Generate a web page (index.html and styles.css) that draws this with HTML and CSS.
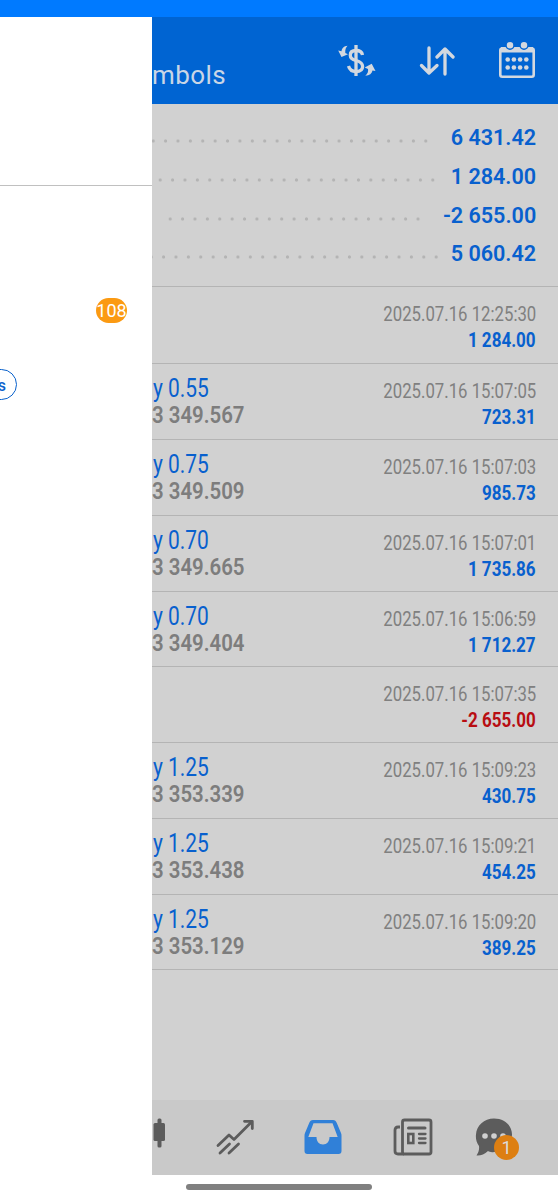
FILE: index.html
```html
<!DOCTYPE html>
<html lang="en">
  <head>
    <meta charset="UTF-8" />
    <meta name="viewport" content="width=device-width, initial-scale=1.0" />
    <title>History</title>
    <link rel="stylesheet" href="styles.css">
  </head>

  <body>
    <div class="statusbar"></div>
    <div class="app">
      <div class="drawer">
        <div class="account"></div>
        <div class="menu">
          <div class="menu-item mail"><span class="count">108</span></div>
          <div class="menu-item ads"><span class="pill">s</span></div>
        </div>
      </div>

      <div class="screen">
        <div class="header">
          <div class="title">mbols</div>
          <div class="actions">
            <svg class="ic-dollar" width="38" height="34" viewBox="0 0 38 34">
              <g fill="none" stroke="#d3d8df" stroke-width="3.300">
                <path d="M24.500 11C24 8 21.500 6.500 18 6.500C14.500 6.500 12.300 8.300 12.300 11.200C12.300 14.200 14.500 15.500 18 16.500C22 17.600 24.600 19 24.600 22.500C24.600 25.800 22 27.500 18 27.500C14 27.500 11.500 25.500 10.500 22" />
                <path d="M18 1V32" />
              </g>
              <g fill="#d3d8df">
                <path d="M9.500 1.800C6 2 3.800 4.500 3.500 7.200L.2 6.500L3.500 13L10 10.300L7.300 9C7 6 7.800 3.500 9.500 1.800Z" />
                <path d="M27.300 31.800C31.500 31.500 34 29.500 34.500 26.500L37.500 27L33.700 19.800L26.700 23.500L30 25C30.500 27.500 29.500 30 27.300 31.800Z" />
              </g>
            </svg>
            <svg class="ic-sort" width="36" height="30" viewBox="0 0 36 30">
              <g fill="none" stroke="#d3d8df" stroke-width="3.300" stroke-linecap="round" stroke-linejoin="round">
                <path d="M10 2V27M2.500 19.500L10 27L18 19.500" />
                <path d="M26 28V3M18 11L26 3L34 11" />
              </g>
            </svg>
            <svg class="ic-calendar" width="36" height="38" viewBox="0 0 36 38">
              <rect x="1.300" y="7.500" width="33.400" height="28.200" rx="2" fill="none" stroke="#d3d8df" stroke-width="2.600" />
              <path d="M2 6H34V11.500H2Z" fill="#d3d8df" />
              <g fill="#d3d8df" stroke="#0064d2" stroke-width="1.500">
                <circle cx="11" cy="4.200" r="4" />
                <circle cx="25" cy="4.200" r="4" />
              </g>
              <g fill="#d3d8df">
                <circle cx="8.700" cy="18.500" r="2.300" /><circle cx="14.900" cy="18.500" r="2.300" />
                <circle cx="21.100" cy="18.500" r="2.300" /><circle cx="27.300" cy="18.500" r="2.300" />
                <circle cx="8.700" cy="26.500" r="2.300" /><circle cx="14.900" cy="26.500" r="2.300" />
                <circle cx="21.100" cy="26.500" r="2.300" /><circle cx="27.300" cy="26.500" r="2.300" />
              </g>
            </svg>
          </div>
        </div>

        <div class="summary">
          <div class="line"><i class="dots profit"></i><b>6 431.42</b></div>
          <div class="line"><i class="dots deposit"></i><b>1 284.00</b></div>
          <div class="line"><i class="dots withdrawal"></i><b>-2 655.00</b></div>
          <div class="line"><i class="dots balance"></i><b>5 060.42</b></div>
        </div>

        <ul class="deals">
          <li>
            <div class="left"></div>
            <div class="right"><span class="date">2025.07.16 12:25:30</span><span class="sum">1 284.00</span></div>
          </li>
          <li>
            <div class="left"><span class="type">y 0.55</span><span class="price">3 349.567</span></div>
            <div class="right"><span class="date">2025.07.16 15:07:05</span><span class="sum">723.31</span></div>
          </li>
          <li>
            <div class="left"><span class="type">y 0.75</span><span class="price">3 349.509</span></div>
            <div class="right"><span class="date">2025.07.16 15:07:03</span><span class="sum">985.73</span></div>
          </li>
          <li>
            <div class="left"><span class="type">y 0.70</span><span class="price">3 349.665</span></div>
            <div class="right"><span class="date">2025.07.16 15:07:01</span><span class="sum">1 735.86</span></div>
          </li>
          <li>
            <div class="left"><span class="type">y 0.70</span><span class="price">3 349.404</span></div>
            <div class="right"><span class="date">2025.07.16 15:06:59</span><span class="sum">1 712.27</span></div>
          </li>
          <li>
            <div class="left"></div>
            <div class="right"><span class="date">2025.07.16 15:07:35</span><span class="sum loss">-2 655.00</span></div>
          </li>
          <li>
            <div class="left"><span class="type">y 1.25</span><span class="price">3 353.339</span></div>
            <div class="right"><span class="date">2025.07.16 15:09:23</span><span class="sum">430.75</span></div>
          </li>
          <li>
            <div class="left"><span class="type">y 1.25</span><span class="price">3 353.438</span></div>
            <div class="right"><span class="date">2025.07.16 15:09:21</span><span class="sum">454.25</span></div>
          </li>
          <li>
            <div class="left"><span class="type">y 1.25</span><span class="price">3 353.129</span></div>
            <div class="right"><span class="date">2025.07.16 15:09:20</span><span class="sum">389.25</span></div>
          </li>
        </ul>

        <div class="tabs">
          <svg class="tab-chart" width="14" height="30" viewBox="0 0 14 30">
            <g fill="#5c5c5c">
              <rect x="5.500" y="0.500" width="4" height="29" rx="1.500" />
              <rect x="1.500" y="5" width="11.500" height="18" rx="1.500" />
            </g>
          </svg>
          <svg class="tab-trade" width="38" height="36" viewBox="0 0 38 36">
            <g fill="none" stroke="#5c5c5c" stroke-width="2.800" stroke-linecap="round" stroke-linejoin="round">
              <path d="M2 26.500L13 16L18 20.500L35.500 3" />
              <path d="M28.500 2.300H36.300V9.500" />
              <path d="M4 34L13.500 25M13 34L22.500 25" />
            </g>
          </svg>
          <svg class="tab-history" width="38" height="36" viewBox="0 0 38 36">
            <path fill="#3080d8" fill-rule="evenodd" d="M9 1H29C31 1 32 2 32.800 4L37 14C37.500 15 37.500 16 37.500 17V32C37.500 34 36.500 35 34.500 35H3.500C1.500 35 .5 34 .5 32V17C.5 16 .5 15 1 14L5.200 4C6 2 7 1 9 1ZM9.500 4.200L4.300 18H12.500C12.500 22.500 15 25.500 19 25.500C23 25.500 25.500 22.500 25.500 18H33.700L28.500 4.200Z" />
          </svg>
          <svg class="tab-news" width="40" height="38" viewBox="0 0 40 38">
            <g fill="none" stroke="#5c5c5c" stroke-width="2.800">
              <rect x="9.500" y="2" width="28.500" height="34" rx="2" />
              <path d="M7 9H5C3 9 2 10 2 12V33C2 35 3 36 5 36H11" />
              <path d="M15.500 10H32" stroke-linecap="round" stroke-width="3" />
              <rect x="15.300" y="16" width="5" height="9" stroke-width="2.600" />
              <path d="M26 16H32.500M26 20.500H32.500M26 25H32.500" stroke-linecap="round" stroke-width="2.300" />
            </g>
          </svg>
          <div class="tab-chat">
            <svg width="38" height="38" viewBox="0 0 38 38">
              <path fill="#5c5c5c" d="M19 .5C29.500 .5 37 7.500 37 16.500C37 26.500 29.500 33 19 34C16.500 34.500 14.500 34 13 33C9.500 36.500 5.500 37.800 1.500 37.500C3.500 34.500 4.500 31.500 4 28C1.500 24.500 .5 20.500 1 16.500C1.500 7.500 9 .5 19 .5Z" />
              <g fill="#d0d0d0">
                <circle cx="10" cy="18" r="2.800" />
                <circle cx="19" cy="18" r="2.800" />
                <circle cx="28" cy="18" r="2.800" />
              </g>
            </svg>
            <span class="unread">1</span>
          </div>
        </div>
      </div>
    </div>
    <div class="navbar"><div class="home"></div></div>
  </body>
</html>
```
FILE: styles.css
```css
body {
  margin: 0;
  padding: 0;
  width: 558px;
  height: 1200px;
  overflow: hidden;
  background: #fff;
  font-family: Roboto, "Liberation Sans", sans-serif;
}
.statusbar {
  height: 17px;
  background: #007aff;
}
.app {
  display: flex;
  height: 1158px;
}

/* drawer */
.drawer {
  width: 152px;
  flex: none;
  background: #fff;
  overflow: hidden;
}
.account {
  height: 168px;
  border-bottom: 1px solid #c0c0c0;
}
.menu-item {
  display: flex;
}
.mail {
  padding: 112px 0 0 96px;
}
.count {
  width: 31px;
  height: 25px;
  border-radius: 13px;
  background: #fb9a12;
  color: #fff;
  font-size: 18px;
  line-height: 25px;
  display: flex;
  justify-content: center;
}
.ads {
  padding-top: 46px;
}
.pill {
  box-sizing: border-box;
  width: 57px;
  height: 31px;
  margin-left: -40px;
  padding-right: 10px;
  border: 1.500px solid #0a62cc;
  border-radius: 16px;
  color: #0a62cc;
  font-size: 16px;
  font-weight: 500;
  line-height: 31px;
  text-align: right;
}

/* history screen */
.screen {
  flex: 1;
  min-width: 0;
  display: flex;
  flex-direction: column;
  background: #d1d1d1;
  overflow: hidden;
}
.header {
  display: flex;
  justify-content: space-between;
  height: 87px;
  background: #0064d2;
}
.title {
  padding-top: 42px;
  color: #c9d6e6;
  font-size: 26px;
  letter-spacing: 0.400px;
  line-height: 32px;
}
.actions {
  display: flex;
  align-items: flex-start;
  padding-right: 23px;
}
.ic-dollar {
  margin: 27px 43px 0 0;
}
.ic-sort {
  margin: 29px 44px 0 0;
}
.ic-calendar {
  margin-top: 24px;
}
.summary {
  box-sizing: border-box;
  height: 182px;
  padding: 14px 22px 0 0;
}
.line {
  display: flex;
  justify-content: space-between;
  height: 38.800px;
  line-height: 39.800px;
  font-size: 22px;
}
.line b {
  color: #0860ce;
  font-weight: 600;
  transform: scaleX(0.98);
  transform-origin: right;
}
.dots {
  height: 12px;
  margin-top: 17px;
  background: radial-gradient(circle, #b4b4b4 1.200px, transparent 2px) 0 0 / 12.400px 12px repeat-x;
}
.profit {
  width: 285px;
  margin-left: -5.500px;
}
.deposit {
  width: 285px;
  margin-left: 2px;
}
.withdrawal {
  width: 260px;
  margin-left: 12px;
}
.balance {
  width: 297px;
  margin-left: -7px;
}
.deals {
  flex: 1;
  list-style: none;
  margin: 0;
  padding: 0;
}
.deals li {
  box-sizing: border-box;
  display: flex;
  justify-content: space-between;
  height: 75.850px;
  border-top: 1px solid #b4b4b4;
}
.deals li:first-child {
  height: 77px;
}
.deals li:last-child {
  border-bottom: 1px solid #b4b4b4;
}
.left,
.right {
  display: flex;
  flex-direction: column;
  line-height: 26px;
  white-space: nowrap;
}
.left {
  padding-top: 12px;
}
.right {
  align-items: flex-end;
  padding: 14px 22px 0 0;
}
/* narrow the digits to a condensed cut */
.type,
.price {
  transform: scaleX(0.83);
  transform-origin: left;
}
.date,
.sum {
  transform: scaleX(0.83);
  transform-origin: right;
}
.type {
  margin-left: 0.500px;
  color: #0860ce;
  font-size: 25.200px;
}
.price {
  color: #7d7d7d;
  font-size: 24.600px;
  font-weight: 600;
}
.date {
  color: #808080;
  font-size: 20.200px;
}
.sum {
  color: #0860ce;
  font-size: 20.500px;
  font-weight: 700;
}
.loss {
  color: #b80d12;
}

/* bottom tabs */
.tabs {
  display: flex;
  align-items: flex-start;
  height: 75px;
  background: #c9c9c9;
}
.tab-chart {
  margin: 18px 50px 0 0;
}
.tab-trade {
  margin: 19px 50px 0 0;
}
.tab-history {
  margin: 19px 51px 0 0;
}
.tab-news {
  margin: 18px 42px 0 0;
}
.tab-chat {
  position: relative;
  margin-top: 18px;
}
.unread {
  position: absolute;
  left: 19px;
  top: 17px;
  width: 25px;
  height: 25px;
  border-radius: 50%;
  background: #dd7f12;
  color: #dcdcdc;
  font-size: 18px;
  line-height: 25px;
  text-align: center;
}

.navbar {
  display: flex;
  justify-content: center;
  height: 25px;
}
.home {
  width: 186px;
  height: 6px;
  margin-top: 9px;
  border-radius: 3px;
  background: #808080;
}
```
